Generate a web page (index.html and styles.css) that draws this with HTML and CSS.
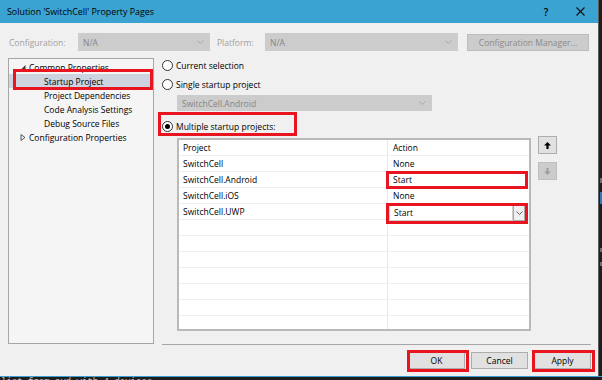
FILE: index.html
```html
<!DOCTYPE html>
<html>
<head>
<meta charset="utf-8">
<link rel="stylesheet" href="styles.css">
</head>
<body>
<div class="screen">
  <div class="dialog">
    <div class="titlebar">
      <span class="title">Solution 'SwitchCell' Property Pages</span>
      <span class="tb-btn help">?</span>
      <span class="tb-btn close"><svg width="9" height="9" viewBox="0 0 9 9"><path d="M0.5 0.5 L8.5 8.5 M8.5 0.5 L0.5 8.5" stroke="#111" stroke-width="1.1" fill="none"/></svg></span>
    </div>
    <div class="content">
      <div class="config-row">
        <span class="lbl lbl-config">Configuration:</span>
        <div class="combo combo-config"><span>N/A</span><svg class="chev" width="7" height="4" viewBox="0 0 7 4"><path d="M0.5 0.5 L3.5 3.5 L6.5 0.5" fill="none" stroke="#a8a8a8" stroke-width="1"/></svg></div>
        <span class="lbl lbl-platform">Platform:</span>
        <div class="combo combo-platform"><span>N/A</span><svg class="chev" width="7" height="4" viewBox="0 0 7 4"><path d="M0.5 0.5 L3.5 3.5 L6.5 0.5" fill="none" stroke="#a8a8a8" stroke-width="1"/></svg></div>
        <div class="cfgmgr">Configuration Manager...</div>
      </div>
      <div class="main">
        <div class="tree">
          <div class="trow lvl0"><svg class="tri" width="5" height="5" viewBox="0 0 5 5"><path d="M5 0 L5 5 L0 5 Z" fill="#3c3c3c"/></svg><span>Common Properties</span></div>
          <div class="trow lvl1 selected"><span>Startup Project</span></div>
          <div class="trow lvl1"><span>Project Dependencies</span></div>
          <div class="trow lvl1"><span>Code Analysis Settings</span></div>
          <div class="trow lvl1"><span>Debug Source Files</span></div>
          <div class="trow lvl0"><svg class="tri" width="5" height="7" viewBox="0 0 5 7"><path d="M0.5 0.5 L4.5 3.5 L0.5 6.5 Z" fill="none" stroke="#555" stroke-width="1"/></svg><span>Configuration Properties</span></div>
        </div>
        <div class="page">
          <div class="radio-row r1"><span class="radio"></span><span>Current selection</span></div>
          <div class="radio-row r2"><span class="radio"></span><span>Single startup project</span></div>
          <div class="combo combo-single"><span>SwitchCell.Android</span><svg class="chev" width="7" height="4" viewBox="0 0 7 4"><path d="M0.5 0.5 L3.5 3.5 L6.5 0.5" fill="none" stroke="#a8a8a8" stroke-width="1"/></svg></div>
          <div class="radio-row r3"><span class="radio checked"></span><span>Multiple startup projects:</span></div>
          <div class="grid-wrap">
            <div class="grid">
              <div class="grow head"><div class="c1">Project</div><div class="c2">Action</div></div>
              <div class="grow"><div class="c1">SwitchCell</div><div class="c2">None</div></div>
              <div class="grow"><div class="c1">SwitchCell.Android</div><div class="c2 edit">Start</div></div>
              <div class="grow"><div class="c1">SwitchCell.iOS</div><div class="c2">None</div></div>
              <div class="grow"><div class="c1">SwitchCell.UWP</div><div class="c2 cb-cell"><div class="cb-field">Start</div><div class="cb-btn"><svg width="7" height="4" viewBox="0 0 7 4"><path d="M0.5 0.5 L3.5 3.5 L6.5 0.5" fill="none" stroke="#606060" stroke-width="1"/></svg></div></div></div>
              <div class="grow"><div class="c1"></div><div class="c2"></div></div>
              <div class="grow"><div class="c1"></div><div class="c2"></div></div>
              <div class="grow"><div class="c1"></div><div class="c2"></div></div>
              <div class="grow"><div class="c1"></div><div class="c2"></div></div>
              <div class="grow"><div class="c1"></div><div class="c2"></div></div>
              <div class="grow"><div class="c1"></div><div class="c2"></div></div>
              <div class="grow"><div class="c1"></div><div class="c2"></div></div>
            </div>
            <div class="side-btns">
              <div class="sbtn up"><svg width="7" height="7" viewBox="0 0 7 7"><path d="M3.5 0 L7 3.6 H4.6 V7 H2.4 V3.6 H0 Z" fill="#000"/></svg></div>
              <div class="sbtn down"><svg width="7" height="7" viewBox="0 0 7 7"><path d="M3.5 7 L7 3.4 H4.6 V0 H2.4 V3.4 H0 Z" fill="#a0a0a0"/></svg></div>
            </div>
          </div>
        </div>
      </div>
      <div class="footer">
        <div class="btn">OK</div>
        <div class="btn">Cancel</div>
        <div class="btn">Apply</div>
      </div>
    </div>
  </div>
  <div class="rightstrip">
    <span class="rs-bit rs1"></span>
    <span class="rs-bit rs2"></span>
    <span class="rs-bit rs3"></span>
    <span class="rs-bit rs4"></span>
  </div>
  <div class="bottomstrip">list from avd with 4 devices</div>

  <div class="mark mark-startup"></div>
  <div class="mark mark-multi"></div>
  <div class="mark mark-android"></div>
  <div class="mark mark-uwp"></div>
  <div class="mark mark-ok"></div>
  <div class="mark mark-apply"></div>
</div>
</body>
</html>
```

FILE: styles.css
```css
* { box-sizing: border-box; }
html, body { margin: 0; padding: 0; }
body {
  width: 602px;
  height: 380px;
  overflow: hidden;
  background: #1e1e1e;
  font-family: "Open Sans", "Noto Sans", sans-serif;
  font-size: 8.5px;
  color: #000;
}
.screen {
  position: relative;
  width: 602px;
  height: 380px;
  display: grid;
  grid-template-columns: 598px 4px;
  grid-template-rows: 376px 4px;
}
.dialog {
  background: #f0f0f0;
  display: flex;
  flex-direction: column;
  overflow: hidden;
}
.titlebar {
  height: 23px;
  flex: none;
  background: #3ba3d2;
  display: flex;
  align-items: center;
  padding-left: 7px;
  padding-right: 1px;
}
.title { flex: 1; font-size: 8.9px; }
.tb-btn {
  width: 34px;
  height: 23px;
  display: flex;
  align-items: center;
  justify-content: center;
}
.help { font-size: 10px; font-weight: 600; }
.content {
  flex: 1;
  display: flex;
  flex-direction: column;
  padding: 10px 0 0 8px;
}
.config-row {
  display: flex;
  align-items: center;
  height: 18px;
}
.lbl { color: #a0a0a0; }
.lbl-config { width: 70px; padding-left: 1px; }
.lbl-platform { width: 48px; margin-left: 7px; }
.combo {
  height: 18px;
  background: #cccccc;
  border: 1px solid #cccccc;
  display: flex;
  align-items: center;
  justify-content: space-between;
  padding: 0 5px 0 4px;
  color: #858585;
}
.combo-config { width: 132px; }
.combo-platform { width: 193px; }
.cfgmgr {
  margin-left: 9px;
  width: 122px;
  height: 17px;
  background: #cccccc;
  border: 1px solid #bdbdbd;
  color: #8a8a8a;
  display: flex;
  align-items: center;
  justify-content: center;
}
.main {
  display: flex;
  margin-top: 7px;
  height: 287px;
}
.tree {
  width: 146px;
  height: 286px;
  border: 1px solid #a6a6a6;
  background: #f5f5f5;
  padding-top: 1px;
}
.trow {
  height: 14px;
  display: flex;
  align-items: center;
  white-space: nowrap;
}
.lvl0 { padding-left: 8px; }
.lvl0 .tri { width: 12px; }
.lvl1 { padding-left: 35px; }
.selected { background: #cdd3df; }
.page {
  margin-left: 8px;
  width: 429px;
  display: flex;
  flex-direction: column;
  border-bottom: 1px solid #a6a6a6;
}
.radio-row {
  height: 14px;
  display: flex;
  align-items: center;
  white-space: nowrap;
}
.r2 { margin-top: 5px; }
.r3 { margin-top: 8px; }
.radio {
  width: 11px;
  height: 11px;
  border: 1px solid #333;
  border-radius: 50%;
  background: #fff;
  margin-right: 3px;
  display: flex;
  align-items: center;
  justify-content: center;
}
.radio.checked::after {
  content: "";
  width: 5px;
  height: 5px;
  border-radius: 50%;
  background: #000;
}
.combo-single {
  margin-top: 4px;
  margin-left: 15px;
  width: 255px;
  height: 16px;
}
.grid-wrap {
  display: flex;
  margin-top: 5px;
}
.grid {
  margin-left: 15px;
  width: 354px;
  height: 193px;
  border: 2px solid #b9b9b9;
  background: #fff;
  overflow: hidden;
}
.grow {
  display: grid;
  grid-template-columns: 209px 1fr;
  height: 16px;
  border-bottom: 1px solid #efefef;
}
.c1 {
  border-right: 1px solid #e4e7ee;
  padding-left: 4px;
  line-height: 15px;
  white-space: nowrap;
}
.c2 {
  padding-left: 5px;
  line-height: 15px;
  white-space: nowrap;
}
.cb-cell {
  display: flex;
  padding: 1px 4px 0 1px;
  height: 17px;
}
.cb-field {
  flex: 1;
  border: 1px solid #cfcfcf;
  padding-left: 4px;
  line-height: 13px;
  background: #fff;
}
.cb-btn {
  width: 12px;
  border: 1px solid #a9a9a9;
  background: #f0f0f0;
  display: flex;
  align-items: center;
  justify-content: center;
}
.side-btns {
  margin-left: 7px;
  margin-top: -2px;
  display: flex;
  flex-direction: column;
  gap: 8px;
}
.sbtn {
  width: 19px;
  height: 18px;
  display: flex;
  align-items: center;
  justify-content: center;
}
.sbtn.up { background: #e1e1e1; border: 1px solid #adadad; }
.sbtn.down { background: #cccccc; border: 1px solid #bfbfbf; }
.footer {
  display: flex;
  justify-content: flex-end;
  gap: 6px;
  margin-top: 7px;
  padding-right: 7px;
}
.btn {
  width: 57px;
  height: 17px;
  background: #e1e1e1;
  border: 1px solid #adadad;
  display: flex;
  align-items: center;
  justify-content: center;
}
.rightstrip {
  background: #1e1e1e;
  border-left: 1px solid #5a5a5a;
  position: relative;
}
.rs-bit { position: absolute; left: 1px; width: 3px; background: #6e6e6e; }
.rs1 { top: 178px; height: 5px; }
.rs2 { top: 192px; height: 12px; background: #2f79b6; }
.rs3 { top: 248px; height: 4px; }
.rs4 { top: 262px; height: 4px; }
.bottomstrip {
  grid-column: 1 / span 2;
  background: #1e1e1e;
  border-top: 1px solid #3a9fd0;
  overflow: hidden;
  font-family: "Liberation Mono", monospace;
  font-size: 9px;
  line-height: 10px;
  color: #c8c8c8;
  padding-left: 1px;
  white-space: nowrap;
}
.mark {
  position: absolute;
  border: 3px solid #e8141f;
}
.mark-startup { left: 13px; top: 69px; width: 140px; height: 21px; }
.mark-multi { left: 158px; top: 112px; width: 139px; height: 24px; }
.mark-android { left: 386px; top: 171px; width: 142px; height: 18px; }
.mark-uwp { left: 386px; top: 203px; width: 142px; height: 21px; }
.mark-ok { left: 407px; top: 350px; width: 62px; height: 22px; }
.mark-apply { left: 532px; top: 350px; width: 63px; height: 22px; }
```
